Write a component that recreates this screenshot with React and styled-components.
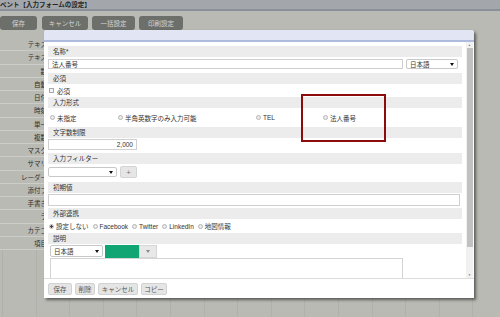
import styled, { createGlobalStyle } from "styled-components";

const GlobalStyle = createGlobalStyle`
  html, body {
    margin: 0;
    padding: 0;
  }
  body {
    font-family: "Liberation Sans", "Noto Sans CJK JP", sans-serif;
  }
`;

// only the part that shows beside the dialog
const sideItems = [
    "テキス",
    "テキス",
    "数",
    "自動",
    "日付",
    "時刻",
    "単一",
    "複数",
    "マスク",
    "サマリ",
    "レーダー",
    "添付フ",
    "手書き",
    "ラ",
    "カテゴ",
    "項目",
];

function Arrow({ color = "#111" }) {
    return (
        <svg width="4" height="3" viewBox="0 0 4 3">
            <path d="M0 0 L4 0 L2 3 Z" fill={color} />
        </svg>
    );
}

function Radio({ checked, label }) {
    return (
        <RadioItem>
            <RadioDot $checked={checked} />
            <span>{label}</span>
        </RadioItem>
    );
}

function App() {
    return (
        <Page>
            <GlobalStyle />
            <TitleBar>ベント【入力フォームの設定】</TitleBar>
            <Toolbar>
                <ToolButton $w={37}>保存</ToolButton>
                <ToolButton $w={46} $ml={1}>キャンセル</ToolButton>
                <ToolButton $w={43}>一括設定</ToolButton>
                <ToolButton $w={44}>印刷設定</ToolButton>
            </Toolbar>
            <Workspace>
                <Sidebar>
                    {sideItems.map((item, i) => (
                        <SideRow key={i}>{item}</SideRow>
                    ))}
                </Sidebar>
            </Workspace>

            <Modal>
                <ModalHeader />
                <ModalBody>
                    <Content>
                        <LabelBar>名称*</LabelBar>
                        <Row $pad="2px 0 4px">
                            <TextInput $w={355} readOnly value="法人番号" />
                            <Select $w={52}>
                                日本語
                                <Arrow />
                            </Select>
                        </Row>

                        <LabelBar>必須</LabelBar>
                        <Row $h={13}>
                            <CheckItem>
                                <CheckBox />
                                <span>必須</span>
                            </CheckItem>
                        </Row>

                        <LabelBar>入力形式</LabelBar>
                        <FormatRow>
                            <Radio label="未指定" />
                            <Radio label="半角英数字のみ入力可能" />
                            <Radio label="TEL" />
                            <Radio label="法人番号" />
                        </FormatRow>

                        <LabelBar>文字数制限</LabelBar>
                        <Row $pad="1px 0 3px">
                            <TextInput $w={89} $h={11} $right readOnly value="2,000" />
                        </Row>

                        <LabelBar>入力フィルター</LabelBar>
                        <Row $pad="2px 0 4px">
                            <Select $w={69}>
                                <span />
                                <Arrow />
                            </Select>
                            <SmallButton $w={17}>+</SmallButton>
                        </Row>

                        <LabelBar>初期値</LabelBar>
                        <Row $pad="1px 0 2px">
                            <TextInput $w={412} $h={12} readOnly value="" />
                        </Row>

                        <LabelBar>外部連携</LabelBar>
                        <LinkRow>
                            <Radio checked label="設定しない" />
                            <Radio label="Facebook" />
                            <Radio label="Twitter" />
                            <Radio label="LinkedIn" />
                            <Radio label="地図情報" />
                        </LinkRow>

                        <LabelBar>説明</LabelBar>
                        <DescTools>
                            <Select $w={53} $h={12}>
                                日本語
                                <Arrow />
                            </Select>
                            <ColorSwatch />
                            <SwatchButton>
                                <Arrow color="#888" />
                            </SwatchButton>
                        </DescTools>
                        <TextArea />
                    </Content>
                    <Scrollbar>
                        <ScrollArrow>▲</ScrollArrow>
                        <ScrollTrack>
                            <ScrollThumb />
                        </ScrollTrack>
                        <ScrollArrow>▼</ScrollArrow>
                    </Scrollbar>
                </ModalBody>
                <Footer>
                    <FooterButton $w={24}>保存</FooterButton>
                    <FooterButton $w={20}>削除</FooterButton>
                    <FooterButton $w={40}>キャンセル</FooterButton>
                    <FooterButton $w={26}>コピー</FooterButton>
                </Footer>
            </Modal>

            <Highlight />
        </Page>
    );
}

const Page = styled.div`
    position: relative;
    width: 500px;
    height: 317px;
    overflow: hidden;
    background: #b9bab3;
    font-size: 6.5px;
    color: #333;
`;

const TitleBar = styled.div`
    height: 9px;
    background: #a3a7ab;
    border-bottom: 2px solid #8a9099;
    font-size: 6.5px;
    font-weight: bold;
    line-height: 9px;
    color: #262626;
    white-space: nowrap;
`;

const Toolbar = styled.div`
    display: flex;
    gap: 4px;
    padding-top: 5px;
    height: 14px;
`;

const ToolButton = styled.div`
    width: ${(p) => p.$w}px;
    margin-left: ${(p) => p.$ml || 0}px;
    height: 14px;
    display: flex;
    align-items: center;
    justify-content: center;
    background: #6d6f6b;
    border-radius: 3px;
    color: #d6d6d4;
`;

const Workspace = styled.div`
    height: 287px;
    background-image: repeating-linear-gradient(
        90deg,
        transparent 0 2px,
        rgba(0, 0, 0, 0.05) 2px 3px,
        transparent 3px 33.6px
    );
`;

const Sidebar = styled.div`
    width: 47px;
    padding-top: 8px;
    background: #b9bab3;
`;

const SideRow = styled.div`
    box-sizing: border-box;
    height: 13.25px;
    line-height: 13px;
    text-align: right;
    border-bottom: 1px solid rgba(255, 255, 255, 0.28);
    color: #2c2c2c;
    white-space: nowrap;
`;

const Modal = styled.div`
    position: absolute;
    left: 44px;
    top: 30px;
    width: 430px;
    height: 268px;
    display: flex;
    flex-direction: column;
    background: #fff;
    border-radius: 3px 3px 0 0;
    box-shadow: 2px 2px 3px rgba(0, 0, 0, 0.5);
    overflow: hidden;
`;

const ModalHeader = styled.div`
    flex: none;
    height: 10px;
    background: #e1e5f4;
    border-bottom: 2px solid #afbadf;
`;

const ModalBody = styled.div`
    flex: 1;
    min-height: 0;
    display: flex;
`;

const Content = styled.div`
    flex: 1;
    min-width: 0;
    padding: 4px 4px 0;
    overflow: hidden;
`;

const LabelBar = styled.div`
    height: 11px;
    line-height: 11px;
    padding-left: 5px;
    background: #ececec;
    color: #333;
`;

const Row = styled.div`
    display: flex;
    align-items: center;
    gap: 3px;
    height: ${(p) => (p.$h ? `${p.$h}px` : "auto")};
    padding: ${(p) => p.$pad || 0};
`;

const TextInput = styled.input`
    box-sizing: border-box;
    width: ${(p) => p.$w}px;
    height: ${(p) => p.$h || 10}px;
    margin: 0;
    padding: 0 3px;
    border: 1px solid #cfcfcf;
    background: #fff;
    font: inherit;
    font-size: 6.5px;
    color: #333;
    text-align: ${(p) => (p.$right ? "right" : "left")};
    outline: none;
`;

const Select = styled.div`
    box-sizing: border-box;
    width: ${(p) => p.$w}px;
    height: ${(p) => p.$h || 10}px;
    display: flex;
    align-items: center;
    justify-content: space-between;
    padding: 0 3px;
    border: 1px solid #c8c8c8;
    border-radius: 2px;
    background: #fff;
    color: #333;
`;

const SmallButton = styled.div`
    box-sizing: border-box;
    width: ${(p) => p.$w}px;
    height: 12px;
    display: flex;
    align-items: center;
    justify-content: center;
    background: #e6e6e6;
    border: 1px solid #d4d4d4;
    border-radius: 2px;
    color: #777;
    font-size: 8px;
`;

const CheckItem = styled.label`
    display: flex;
    align-items: center;
    gap: 3px;
    padding-left: 1px;
`;

const CheckBox = styled.span`
    box-sizing: border-box;
    width: 5px;
    height: 5px;
    border: 1px solid #a9a9a9;
    background: #f4f4f4;
`;

const FormatRow = styled.div`
    display: grid;
    grid-template-columns: 68px 138px 67px 1fr;
    align-items: center;
    height: 19px;
    padding-left: 2px;
`;

const LinkRow = styled.div`
    display: flex;
    align-items: center;
    gap: 4px;
    height: 14px;
    padding-left: 1px;
`;

const RadioItem = styled.label`
    display: flex;
    align-items: center;
    gap: 2px;
    white-space: nowrap;
`;

const RadioDot = styled.span`
    box-sizing: border-box;
    width: 5px;
    height: 5px;
    border-radius: 50%;
    border: 1px solid #b5b5b5;
    background: ${(p) => (p.$checked ? "radial-gradient(circle, #444 0 1.2px, #e8e8e8 1.4px)" : "#ececec")};
`;

const DescTools = styled.div`
    display: flex;
    align-items: stretch;
    height: 13px;
    padding: 1px 0 0 2px;
`;

const ColorSwatch = styled.div`
    width: 34px;
    margin-left: 2px;
    background: #12a574;
`;

const SwatchButton = styled.div`
    width: 18px;
    display: flex;
    align-items: center;
    justify-content: center;
    background: #e8e8e8;
    border: 1px solid #d6d6d6;
    box-sizing: border-box;
`;

const TextArea = styled.div`
    box-sizing: border-box;
    width: 353px;
    height: 26px;
    margin-left: 2px;
    border: 1px solid #d4d4d4;
    background: #fff;
`;

const Scrollbar = styled.div`
    flex: none;
    width: 7px;
    margin-right: 1px;
    display: flex;
    flex-direction: column;
    background: #f1f1f1;
`;

const ScrollArrow = styled.div`
    height: 6px;
    font-size: 3px;
    line-height: 6px;
    text-align: center;
    color: #777;
`;

const ScrollTrack = styled.div`
    flex: 1;
    padding: 0 0.5px;
`;

const ScrollThumb = styled.div`
    height: 199px;
    background: #c1c1c1;
`;

const Footer = styled.div`
    flex: none;
    height: 19px;
    display: flex;
    align-items: center;
    gap: 3px;
    padding-left: 4px;
    border-top: 1px solid #dcdcdc;
`;

const FooterButton = styled.div`
    box-sizing: border-box;
    width: ${(p) => p.$w}px;
    height: 12px;
    display: flex;
    align-items: center;
    justify-content: center;
    background: #e5e5e5;
    border: 1px solid #d2d2d2;
    border-radius: 2px;
    color: #555;
    white-space: nowrap;
`;

const Highlight = styled.div`
    position: absolute;
    left: 301px;
    top: 94px;
    width: 85px;
    height: 48px;
    box-sizing: border-box;
    border: 2px solid #8c0c0c;
    pointer-events: none;
`;

export default App;
